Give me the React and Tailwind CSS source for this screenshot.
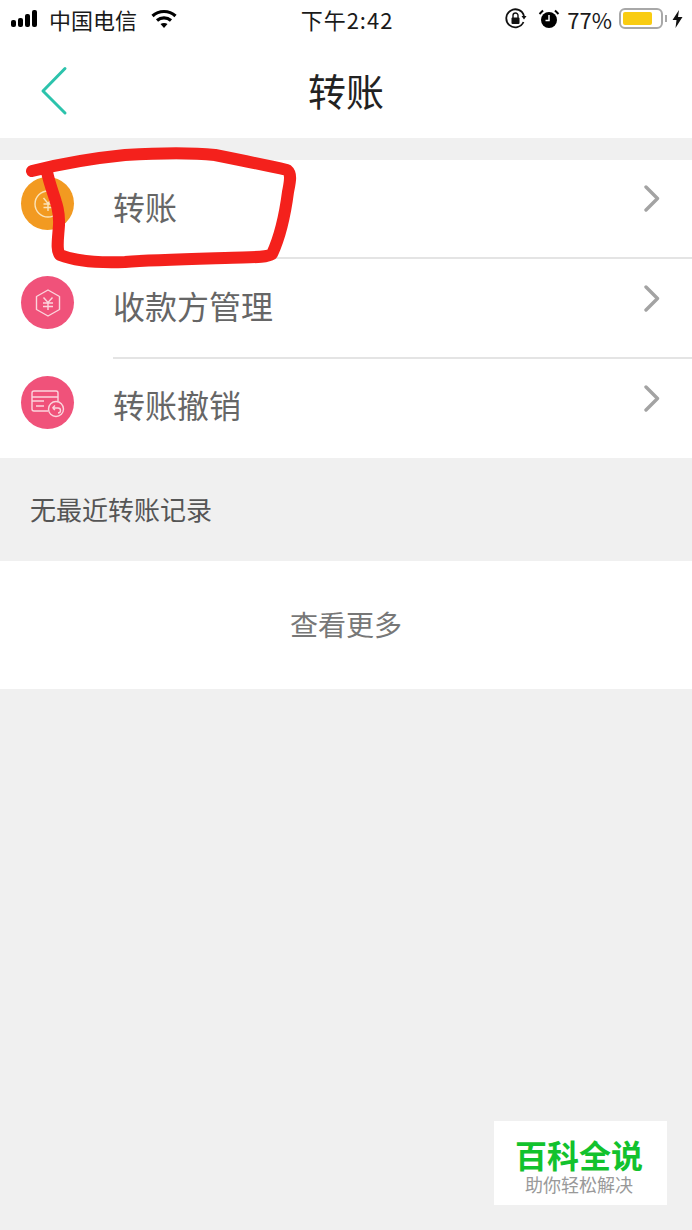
const cjk = { fontFamily: '"Noto Sans CJK SC", "Liberation Sans", sans-serif' };

const Chevron = () => (
  <svg width="16" height="27" viewBox="0 0 16 27" fill="none" className="shrink-0">
    <path d="M2 2 L13.5 13.5 L2 25" stroke="#a3a3a3" strokeWidth="3.4" strokeLinecap="round" strokeLinejoin="round" />
  </svg>
);

const CoinIcon = () => (
  <svg width="30" height="30" viewBox="0 0 30 30" fill="none" stroke="#fbe3b8" strokeWidth="1.4">
    <circle cx="15" cy="15" r="13" />
    <path d="M10.5 9 L15 14.5 L19.5 9 M15 14.5 V22 M10.5 15 H19.5 M10.5 18.5 H19.5" />
  </svg>
);

const HexIcon = () => (
  <svg width="30" height="30" viewBox="0 0 30 30" fill="none" stroke="#fbd5dd" strokeWidth="1.4">
    <path d="M15 2 L26.5 8.5 V21.5 L15 28 L3.5 21.5 V8.5 Z" strokeLinejoin="round" />
    <path d="M10.5 9.5 L15 14.5 L19.5 9.5 M15 14.5 V22 M10 15 H20 M10 18.5 H20" />
  </svg>
);

const CardIcon = () => (
  <svg width="36" height="30" viewBox="0 0 36 30" fill="none" stroke="#fbd5dd" strokeWidth="1.4">
    <path d="M18 23 H4 a2 2 0 0 1 -2 -2 V5 a2 2 0 0 1 2 -2 H26 a2 2 0 0 1 2 2 V13" />
    <path d="M2 9 H28 M2 13 H14 M6 18 H14" />
    <circle cx="26" cy="21" r="7.5" fill="#f0527a" />
    <path d="M22.5 20 H28 a2.5 2.5 0 0 1 0 5 M22.5 20 L25 17.5 M22.5 20 L25 22" />
  </svg>
);

const rows = [
  { label: '转账', height: 'h-[99px]', color: 'bg-[#f29a21]', icon: <CoinIcon />, divider: true },
  { label: '收款方管理', height: 'h-[100px]', color: 'bg-[#f0527a]', icon: <HexIcon />, divider: true },
  { label: '转账撤销', height: 'h-[99px]', color: 'bg-[#f0527a]', icon: <CardIcon />, divider: false },
];

const StatusBar = () => (
  <div className="h-[40px] flex items-center justify-between pl-[11px] pr-[9px] pb-[3px] text-[#1a1a1a]">
    <div className="flex items-center w-[240px]">
      <div className="flex items-end gap-[2px]">
        <span className="w-[5px] h-[7px] rounded-[2px] bg-black" />
        <span className="w-[5px] h-[9px] rounded-[2px] bg-black" />
        <span className="w-[5px] h-[13px] rounded-[2px] bg-black" />
        <span className="w-[5px] h-[17px] rounded-[2px] bg-black" />
      </div>
      <span className="ml-[12px] text-[22px] leading-none">中国电信</span>
      <svg width="26" height="20" viewBox="0 0 26 20" className="ml-[14px]" fill="none" stroke="#000" strokeWidth="3.2">
        <path d="M1.5 7 C8 1 18 1 24.5 7" />
        <path d="M6 11.5 C10 8 16 8 20 11.5" />
        <path d="M13 19 L9.5 15 C11.5 13.5 14.5 13.5 16.5 15 Z" fill="#000" stroke="none" />
      </svg>
    </div>
    <span className="text-[22px] leading-none tracking-[1px]">下午2:42</span>
    <div className="flex items-center justify-end w-[240px]">
      <svg width="22" height="22" viewBox="0 0 22 22" fill="none">
        <path d="M18.5 14 A9 9 0 1 1 19 8" stroke="#111" strokeWidth="1.8" />
        <path d="M21.5 8 L19 11.5 L16.5 8 Z" fill="#111" />
        <rect x="6.5" y="9.5" width="8" height="6.5" rx="1" fill="#111" />
        <path d="M8 10 V7.5 a2.5 2.5 0 0 1 5 0 V10" stroke="#111" strokeWidth="1.4" />
      </svg>
      <svg width="22" height="22" viewBox="0 0 22 22" fill="none" className="ml-[11px]">
        <circle cx="11" cy="12" r="8" fill="#000" />
        <path d="M11 7 V12.5 H7.5" stroke="#fff" strokeWidth="1.5" />
        <path d="M1.5 6 L5 2.5 M20.5 6 L17 2.5" stroke="#000" strokeWidth="2" />
      </svg>
      <span className="ml-[7px] text-[22px] leading-none">77%</span>
      <div className="ml-[7px] w-[44px] h-[21px] rounded-[6px] border-2 border-[#a8a8a8] p-[2px]">
        <div className="w-[29px] h-full rounded-[2px] bg-[#f9cc12]" />
      </div>
      <span className="ml-[2px] w-[2px] h-[7px] bg-[#a8a8a8]" />
      <svg width="11" height="18" viewBox="0 0 11 18" className="ml-[5px]">
        <path d="M7 0 L0.5 10 H4.5 L3.5 18 L10.5 7 H6 Z" fill="#111" />
      </svg>
    </div>
  </div>
);

export default function App() {
  return (
    <div className="relative w-[692px] h-[1230px] overflow-hidden bg-[#f0f0f0]" style={cjk}>
      <div className="bg-white h-[138px]">
        <StatusBar />
        <div className="relative h-[98px] flex items-center justify-center pt-[2px]">
          <svg width="30" height="50" viewBox="0 0 30 50" fill="none" className="absolute left-[40px] top-[26px]">
            <path d="M25 2.5 L3 25 L25 47" stroke="#2cc3ac" strokeWidth="3" strokeLinecap="round" strokeLinejoin="round" />
          </svg>
          <h1 className="text-[38px] leading-none text-[#222] font-normal">转账</h1>
        </div>
      </div>

      <div className="mt-[22px] bg-white">
        {rows.map((row) => (
          <div key={row.label} className={`flex ${row.height}`}>
            <div className="w-[113px] shrink-0 pl-[21px] pt-[17px]">
              <div className={`w-[53px] h-[53px] rounded-full flex items-center justify-center ${row.color}`}>
                {row.icon}
              </div>
            </div>
            <div className={`flex-1 flex items-center justify-between pr-[32px] ${row.divider ? 'pb-[6px] border-b-2 border-[#e4e4e4]' : 'pb-[9px]'}`}>
              <span className="text-[32px] leading-none text-[#666]">{row.label}</span>
              <span className={row.divider ? '-mt-[14px]' : '-mt-[11px]'}><Chevron /></span>
            </div>
          </div>
        ))}
      </div>

      <div className="h-[103px] flex items-center pl-[30px] pb-[2px]">
        <span className="text-[26px] leading-none text-[#555]">无最近转账记录</span>
      </div>

      <div className="h-[128px] bg-white flex items-center justify-center pb-[3px]">
        <span className="text-[28px] leading-none text-[#777]">查看更多</span>
      </div>

      {/* red marker stroke drawn over the first row */}
      <svg width="692" height="300" viewBox="0 0 692 300" fill="none" className="absolute left-0 top-0 pointer-events-none">
        <path
          d="M32 171 C60 164 95 158 125 155 C160 153 195 153 215 155 C240 160 265 165 287 170 C292 174 290 182 288 192 C285 215 280 237 272 254 C266 258 250 257 225 258 C190 259 150 260 125 262 C100 263 75 261 60 255 C56 250 58 240 59 225 C60 205 52 195 47 172"
          stroke="#f4211c"
          strokeWidth="12"
          strokeLinecap="round"
          strokeLinejoin="round"
        />
      </svg>

      {/* site watermark */}
      <div className="absolute left-[494px] top-[1121px] w-[173px] h-[84px] bg-white flex flex-col items-center pt-[15px] pr-[3px]">
        <span className="text-[32px] leading-[36px] font-bold text-[#12c22d]">百科全说</span>
        <span className="text-[18px] leading-[22px] mt-[1px] text-[#999]">助你轻松解决</span>
      </div>
    </div>
  );
}
